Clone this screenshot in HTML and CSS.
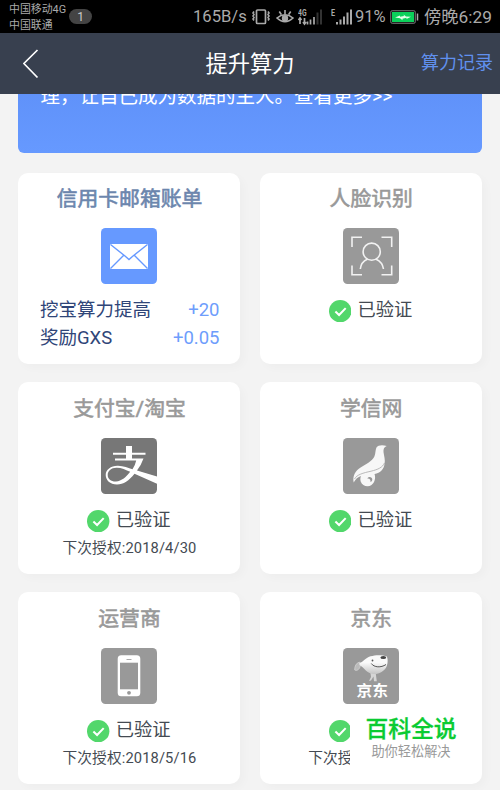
FILE: index.html
```html
<!DOCTYPE html>
<html lang="zh-CN">

<head>
    <meta charset="UTF-8">
    <meta name="viewport" content="width=device-width, initial-scale=1.0">
    <link rel="stylesheet" href="styles.css">
    <title>提升算力</title>
</head>

<body>

    <div class="status">
        <div class="carrier">
            <div>中国移动4G</div>
            <div>中国联通</div>
        </div>
        <span class="count">1</span>
        <div class="indicators">
            <span class="speed">165B/s</span>
            <svg class="vibrate" width="20" height="18" viewBox="0 0 20 18" fill="none" stroke="#aaa">
                <rect x="5.500" y="2" width="9" height="13.500" rx="1" stroke-width="1.700"/>
                <path d="M3 3.500l-1 1.500 1 1.500-1 1.500 1 1.500-1 1.500 1 1.500M17 3.500l1 1.500-1 1.500 1 1.500-1 1.500 1 1.500-1 1.500" stroke-width="1.600"/>
            </svg>
            <svg class="eye" width="18" height="18" viewBox="0 0 18 18" fill="none" stroke="#aaa" stroke-width="1.600">
                <path d="M1 10Q9 3.500 17 10Q9 17.500 1 10zM9 2v4M3.300 3.500l2 3M14.700 3.500l-2 3"/>
                <circle cx="9" cy="10.300" r="2.400" fill="#aaa"/>
            </svg>
            <svg class="signal" width="25" height="18" viewBox="0 0 25 18">
                <text class="net" x="0" y="7.500" textLength="8.500" lengthAdjust="spacingAndGlyphs">4G</text>
                <path d="M2 16v-5M.5 12l1.500-2 1.500 2M6.500 10v5M5 14l1.500 2 1.500-2M9.500 16.500v-3M12.500 16.500v-5M16 16.500v-7.500" stroke="#aaa" stroke-width="1.700" fill="none"/>
                <path d="M19.500 16.500v-12M23 16.500v-15" stroke="#333" stroke-width="2"/>
            </svg>
            <svg class="signal-e" width="22" height="18" viewBox="0 0 22 18">
                <text class="net" x="0" y="7.500" textLength="4" lengthAdjust="spacingAndGlyphs">E</text>
                <path d="M6 16.500v-2.500M9.500 16.500v-5M13 16.500v-8M16.500 16.500v-12M20 16.500v-15" stroke="#aaa" stroke-width="2"/>
            </svg>
            <span class="percent">91%</span>
            <svg class="battery" width="29" height="14" viewBox="0 0 29 14">
                <rect x=".7" y=".7" width="24.600" height="12.600" rx="1.500" fill="#111" stroke="#777"/>
                <rect x="2" y="2" width="22" height="10" fill="#0bd05a"/>
                <path d="M5 7.500l5-2v1.300l4-.8-.5-1.500L16 6.500l5 .2-4.500 2.300v-1.300l-4 1v1.500l-2.500-2z" fill="#e4ffe9"/>
                <path d="M27.500 3.500v7" stroke="#aaa" stroke-width="1.500"/>
            </svg>
            <span class="clock">傍晚6:29</span>
        </div>
    </div>

    <div class="header">
        <svg class="back" width="16" height="30" viewBox="0 0 16 30">
            <path d="M14.500 1L.9 14.500L14.500 28.500" fill="none" stroke="#fff" stroke-width="1.700"/>
        </svg>
        <h1 class="page-title">提升算力</h1>
        <a class="record">算力记录</a>
    </div>

    <div class="content">
        <div class="banner">理，让自己成为数据的主人。查看更多&gt;&gt;</div>

        <div class="cards">
            <div class="card active">
                <h2>信用卡邮箱账单</h2>
                <svg class="icon" viewBox="0 0 56 56">
                    <rect width="56" height="56" rx="4.500" fill="#6699ff"/>
                    <rect x="9" y="16" width="38" height="25" rx="1" fill="#fff"/>
                    <path d="M9.500 16.500L24 28l4 3.500 4-3.500L46.500 16.500M22.500 27.500L9.500 40.500M33.500 27.500L46.500 40.500" fill="none" stroke="#6699ff" stroke-width="1.400"/>
                </svg>
                <div class="reward"><span>挖宝算力提高</span><span class="plus">+20</span></div>
                <div class="reward"><span>奖励GXS</span><span class="plus">+0.05</span></div>
            </div>

            <div class="card">
                <h2>人脸识别</h2>
                <svg class="icon" viewBox="0 0 56 56">
                    <rect width="56" height="56" rx="4.500" fill="#999"/>
                    <g fill="none" stroke="#f2f2f2" stroke-width="1.600">
                        <path d="M9 19V9.200H19M38.500 9.200H48.700V19M9 37.500V46.800H19M38.500 46.800H48.700V37.500"/>
                        <circle cx="28.700" cy="23.700" r="8.600"/>
                        <path d="M17.300 41Q18 34 24.300 31.200M33.100 31.200Q39.500 34 40.500 41"/>
                    </g>
                </svg>
                <div class="verified">
                    <svg class="tick" viewBox="0 0 22 22"><circle cx="11" cy="11" r="11"/><path d="M6.300 11.300l3.600 3.400 6.500-6.700"/></svg>
                    <span>已验证</span>
                </div>
            </div>

            <div class="card">
                <h2>支付宝/淘宝</h2>
                <svg class="icon" viewBox="0 0 56 56">
                    <rect width="56" height="56" rx="4.500" fill="#777"/>
                    <path d="M12 14.800H25V8H31V14.800H44.500V16.800H31V20.500H42.500Q40 27.500 36 32.500L56 38.500V45.800L33.500 35.700C28 42.500 22.500 46.500 16 46.500C9 46.500 4.700 42 4.700 37C4.700 31.500 10 27.500 17 27.700C22.500 27.900 27.500 29.800 31.500 31.200Q34 28 35.200 22.500H14V20.500H25V16.800H12z" fill="#fff"/>
                    <path d="M29.200 33.800C25 31.800 20 29.600 15.500 29.700C10 29.800 6.700 32.900 6.700 37C6.700 41 10.200 43.700 15 43.500C20.500 43.300 25.500 38.800 29.200 33.800z" fill="#777"/>
                </svg>
                <div class="verified">
                    <svg class="tick" viewBox="0 0 22 22"><circle cx="11" cy="11" r="11"/><path d="M6.300 11.300l3.600 3.400 6.500-6.700"/></svg>
                    <span>已验证</span>
                </div>
                <div class="next">下次授权:2018/4/30</div>
            </div>

            <div class="card">
                <h2>学信网</h2>
                <svg class="icon" viewBox="0 0 56 56">
                    <rect width="56" height="56" rx="4.500" fill="#999"/>
                    <path d="M33.500 9.500C35 7 39.500 6.500 43.700 8C41 9 40.300 11 40.500 14C41 18 42.500 22 41.500 26C41 31 37.500 35 31.500 36C33 40 31.500 45 28.500 47C25 49.500 19 48 17.700 43.500C17 41 17.500 39 18 38C15 39 12.500 41 10.700 44.500C9.500 39 11.500 34.500 15.500 31C20 27.500 27 25 30.500 20C33 16.500 32 12.500 33.500 9.500z" fill="#f7f7f7"/>
                    <path d="M11.500 41C14 36.500 20 35 28 33.200C35 31.500 39.500 29.500 41.500 25" fill="none" stroke="#aaa" stroke-width=".8"/>
                    <path d="M24.300 40.500C25 38 29.500 38.500 29.300 41.500C29.200 43 28 44 27.300 43.800C28 42 26.500 40.200 24.300 40.500z" fill="#999"/>
                </svg>
                <div class="verified">
                    <svg class="tick" viewBox="0 0 22 22"><circle cx="11" cy="11" r="11"/><path d="M6.300 11.300l3.600 3.400 6.500-6.700"/></svg>
                    <span>已验证</span>
                </div>
            </div>

            <div class="card">
                <h2>运营商</h2>
                <svg class="icon" viewBox="0 0 56 56">
                    <rect width="56" height="56" rx="4.500" fill="#999"/>
                    <rect x="16.700" y="7.300" width="22.600" height="41" rx="3.500" fill="#fff"/>
                    <rect x="19" y="14.700" width="18" height="26.600" fill="#999"/>
                    <circle cx="28" cy="44.800" r="1.900" fill="#999"/>
                    <path d="M25.500 11.500h5" stroke="#aaa"/>
                </svg>
                <div class="verified">
                    <svg class="tick" viewBox="0 0 22 22"><circle cx="11" cy="11" r="11"/><path d="M6.300 11.300l3.600 3.400 6.500-6.700"/></svg>
                    <span>已验证</span>
                </div>
                <div class="next">下次授权:2018/5/16</div>
            </div>

            <div class="card">
                <h2>京东</h2>
                <svg class="icon" viewBox="0 0 56 56">
                    <defs>
                        <linearGradient id="fur" x1="0" y1="0" x2="0" y2="1">
                            <stop offset=".4" stop-color="#fafafa"/>
                            <stop offset="1" stop-color="#c4c4c4"/>
                        </linearGradient>
                    </defs>
                    <rect width="56" height="56" rx="4.500" fill="#999"/>
                    <path d="M16.500 14C13 15 11.500 18.500 11.700 22C14 23.500 17 21 17.500 17z" fill="#bbb" stroke="#ddd" stroke-width=".6"/>
                    <path d="M27.500 25L28 29L26 33L28 32.500L30.500 28.500L31 33.200H33.800L32.700 25z" fill="#d5d5d5"/>
                    <path d="M16.500 15C20 14.500 22 10 27.500 8.300C33 6.500 40 7 43.500 8.300C45 10 45 15 43.800 18C42 23 36 26.500 30 26C24 25.500 21.500 20 16.500 17z" fill="url(#fur)"/>
                    <ellipse cx="40.300" cy="9.600" rx="2.900" ry="1.500" fill="#444"/>
                    <circle cx="29.500" cy="12.500" r=".9" fill="#555"/>
                    <path d="M28.300 15.500C31 19.500 38 20 43 16.500" fill="none" stroke="#555" stroke-width="1"/>
                    <text class="jd" x="13.500" y="48.200" textLength="31.500" lengthAdjust="spacingAndGlyphs">京东</text>
                </svg>
                <div class="verified">
                    <svg class="tick" viewBox="0 0 22 22"><circle cx="11" cy="11" r="11"/><path d="M6.300 11.300l3.600 3.400 6.500-6.700"/></svg>
                </div>
                <div class="next">下次授</div>
                <div class="mark">
                    <div class="mark-name">百科全说</div>
                    <div class="mark-sub">助你轻松解决</div>
                </div>
            </div>
        </div>
    </div>

</body>
</html>
```
FILE: styles.css
```css
* {
    box-sizing: border-box;
}

body {
    margin: 0;
    height: 790px;
    overflow: hidden;
    background: #f3f3f3;
    font-family: Roboto, "Noto Sans CJK SC", sans-serif;
    color: #444a52;
}

svg {
    display: block;
    flex: none;
}

.status {
    display: flex;
    height: 33px;
    padding-left: 9px;
    background: #000;
    color: #aaa;
    white-space: nowrap;
}

.carrier {
    width: 60px;
    padding-top: 2px;
    font-size: 10.9px;
    line-height: 15.5px;
}

.count {
    width: 23px;
    height: 15px;
    margin-top: 9px;
    border-radius: 8px;
    background: #444;
    color: #ccc;
    font-size: 12px;
    line-height: 16px;
    text-align: center;
}

.indicators {
    display: flex;
    align-items: center;
    height: 34px;
    margin-left: 101px;
    font-size: 17.3px;
    line-height: 34px;
}

.speed {
    width: 58px;
    font-size: 16.6px;
}

.eye {
    margin-left: 5px;
}

.signal {
    margin-left: 4px;
}

.signal-e {
    margin-left: 8px;
}

.net {
    fill: #aaa;
    font-size: 9px;
    font-weight: bold;
}

.percent {
    width: 35px;
    margin-left: 2px;
    font-size: 16.5px;
}

.clock {
    margin-left: 5px;
}

.header {
    position: relative;
    z-index: 1;
    display: grid;
    grid-template-columns: 100px 1fr 100px;
    align-items: center;
    height: 61px;
    padding: 0 7px 0 0;
    background: #38404f;
}

.back {
    margin-left: 23px;
}

.page-title {
    margin: 0;
    padding: 0 0 3px 7px;
    color: #fff;
    font-size: 22.3px;
    font-weight: normal;
    text-align: center;
}

.record {
    padding-bottom: 6px;
    color: #6090ee;
    font-size: 18px;
    text-align: right;
}

.content {
    padding: 0 18px;
}

/* scrolled partly under the header */
.banner {
    height: 77px;
    margin-top: -18px;
    padding-left: 22.5px;
    border-radius: 0 0 6px 6px;
    background: linear-gradient(#5e90f8, #6699ff);
    color: #fff;
    font-size: 19.5px;
    line-height: 41px;
    white-space: nowrap;
}

.cards {
    display: grid;
    grid-template-columns: 222px 222px;
    grid-auto-rows: 191.5px;
    gap: 18.3px 19.7px;
    margin-top: 19.5px;
}

.card {
    position: relative;
    display: flex;
    flex-direction: column;
    align-items: center;
    padding: 11.5px 21px 0 21px;
    border-radius: 10px;
    background: #fff;
    box-shadow: 4px 4px 10px rgba(0, 0, 0, 0.025);
}

.card h2 {
    height: 30px;
    margin: 0 -10px;
    padding-left: 1px;
    color: #999;
    font-size: 20.8px;
    font-weight: normal;
    line-height: 30px;
    -webkit-text-stroke: 0.6px;
}

.card.active h2 {
    color: #6c86ad;
}

.icon {
    width: 56px;
    height: 56px;
    margin: 14px 0 12px;
}

.jd {
    fill: #fff;
    font-size: 14.5px;
    font-weight: bold;
}

.reward {
    display: flex;
    justify-content: space-between;
    width: 100%;
    height: 28px;
    padding-left: 1px;
    color: #2f4578;
    font-size: 18.5px;
    line-height: 28px;
}

.plus {
    margin-right: -0.5px;
    color: #6e9dfc;
}

.verified {
    display: flex;
    gap: 6px;
    width: 83.4px;
    height: 28px;
    font-size: 18.3px;
    line-height: 28px;
    white-space: nowrap;
}

.tick {
    width: 22.4px;
    height: 22.4px;
    margin-top: 4px;
    fill: #52d76b;
}

.tick path {
    fill: none;
    stroke: #fff;
    stroke-width: 2;
}

.next {
    width: 133px;
    font-size: 14.7px;
    letter-spacing: 0.12px;
    line-height: 29px;
    white-space: nowrap;
}

.card:last-child .next {
    width: 125px;
}

/* floats over the bottom right of the last card */
.mark {
    position: absolute;
    top: 118px;
    left: 90.3px;
    width: 122px;
    height: 64px;
    padding-top: 4px;
    background: #fff;
    text-align: center;
}

.mark-name {
    color: #0acb32;
    font-size: 22.8px;
    font-weight: 500;
    line-height: 32px;
    -webkit-text-stroke: 0.3px;
}

.mark-sub {
    color: #999;
    font-size: 13.2px;
    line-height: 12px;
}
```
